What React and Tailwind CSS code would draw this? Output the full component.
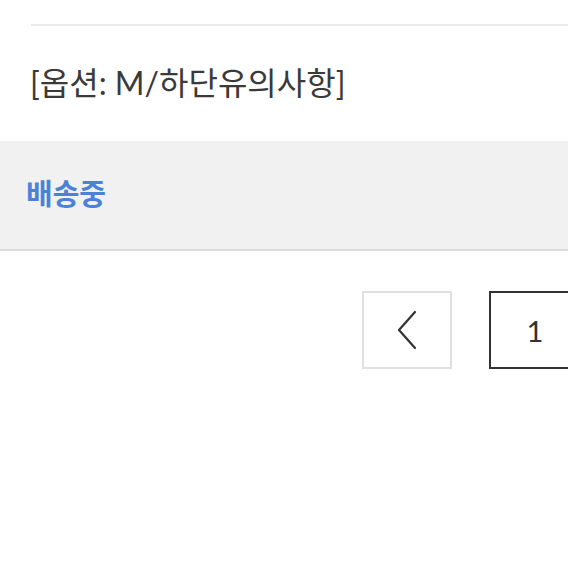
const font = { fontFamily: 'Lato, "Noto Sans CJK KR", sans-serif' };

export default function App() {
  return (
    <div className="h-[568px] w-[568px] overflow-hidden bg-white" style={font}>
      <div className="ml-[31px] pt-[24px]">
        <div className="h-[2px] bg-[#ececec]" />
      </div>
      <div className="flex h-[115px] items-center pl-[30px] pb-[2px]">
        <p className="text-[32px] leading-none text-[#3a3a3a]">[옵션: M/하단유의사항]</p>
      </div>
      <div className="flex h-[110px] items-center border-b-[2px] border-[#dcdcdc] bg-[#f1f1f1] pl-[26px] pb-[4px]">
        <span className="text-[29px] font-bold leading-none text-[#4b82d6]">배송중</span>
      </div>
      <div className="mt-[40px] flex gap-[37px] pl-[362px]">
        <button className="flex h-[78px] w-[90px] shrink-0 items-center justify-center border-2 border-[#e0e0e0] bg-white text-[#333]">
          <svg width="22" height="40" viewBox="0 0 22 40" fill="none">
            <path d="M19 2 L3 20 L19 38" stroke="#333" strokeWidth="2.2" strokeLinecap="round" strokeLinejoin="round" />
          </svg>
        </button>
        <button className="flex h-[78px] w-[92px] shrink-0 items-center justify-center border-2 border-[#333] bg-white text-[29px] leading-none text-[#333]">
          1
        </button>
      </div>
    </div>
  );
}
